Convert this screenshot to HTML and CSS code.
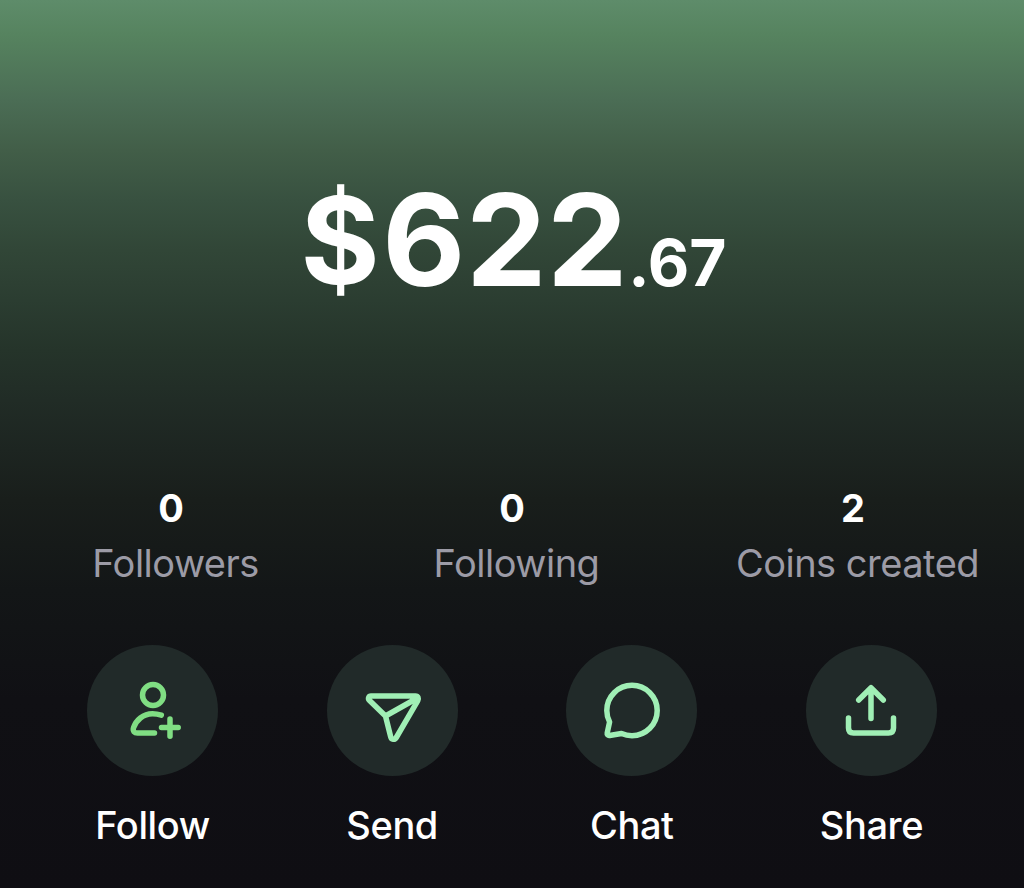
FILE: index.html
```html
<!DOCTYPE html>
<html lang="en">
<head>
    <meta charset="UTF-8">
    <meta name="viewport" content="width=device-width, initial-scale=1.0">
    <title>Profile</title>
    <link rel="stylesheet" href="styles.css">
</head>
<body>
    <main class="profile">
        <h1 class="balance"><span class="currency">$</span><span class="dollars">622</span><span class="cents">.67</span></h1>

        <section class="stats">
            <div class="stat">
                <span class="stat-value">0</span>
                <span class="stat-label">Followers</span>
            </div>
            <div class="stat">
                <span class="stat-value">0</span>
                <span class="stat-label">Following</span>
            </div>
            <div class="stat">
                <span class="stat-value">2</span>
                <span class="stat-label">Coins created</span>
            </div>
        </section>

        <nav class="actions">
            <button class="action">
                <span class="action-icon follow-icon">
                    <svg viewBox="0 0 131 131">
                        <circle cx="66" cy="50" r="10.5"/>
                        <path d="M74.3 70.200C71 69.100 68.500 68.700 65.500 68.700C56 68.700 49 75.500 46.600 82.500C45.400 86.200 47.500 88 50.500 88H67.500M83 74V91.200M74.500 82.500H91.200"/>
                    </svg>
                </span>
                <span class="action-label">Follow</span>
            </button>
            <button class="action">
                <span class="action-icon">
                    <svg viewBox="0 0 131 131">
                        <path d="M44 51H88.500C91 51 92 53.500 90.800 55.600L69.300 92.500C67.800 95.100 64.400 94.700 63.700 91.800L58.500 71L42.300 55.200C40.700 53.600 41.700 51 44 51ZM58.500 71L90.500 53"/>
                    </svg>
                </span>
                <span class="action-label">Send</span>
            </button>
            <button class="action">
                <span class="action-icon">
                    <svg viewBox="0 0 131 131">
                        <path d="M40.800 65.500A25.200 25.200 0 1 1 66 90.700C62.300 90.700 58.700 89.900 55.500 88.500L43.600 90.500C42 90.800 40.900 89.600 41.200 88L43.600 77C41.800 73.500 40.800 69.600 40.800 65.500Z"/>
                    </svg>
                </span>
                <span class="action-label">Chat</span>
            </button>
            <button class="action">
                <span class="action-icon">
                    <svg viewBox="0 0 131 131">
                        <path d="M65 73.500V43M52.700 55L65 42.700L77.300 55M42.500 73V83Q42.500 88 47.500 88H82.500Q87.500 88 87.500 83V73"/>
                    </svg>
                </span>
                <span class="action-label">Share</span>
            </button>
        </nav>
    </main>
</body>
</html>
```
FILE: styles.css
```css
* {
    box-sizing: border-box;
}
body {
    margin: 0;
    font-family: Inter, sans-serif;
    color: #fff;
    background-color: #0f0e13;
}
.profile {
    height: 888px;
    overflow: hidden;
    padding-top: 175px;
    background: linear-gradient(#5e8c6a 0, #56835f 35px, #4b6d55 100px, #425e48 150px, #385140 200px, #314637 250px, #2b3d31 300px, #25342a 350px, #212c26 400px, #1d2521 450px, #191e1b 500px, #131617 590px, #101014 700px, #0f0e13 888px);
}
.balance {
    margin: 0;
    height: 131px;
    line-height: 130px;
    padding-left: 3px;
    text-align: center;
    font-weight: 700;
    white-space: nowrap;
}
.currency {
    font-size: 121px;
    line-height: 1;
    letter-spacing: 2.5px;
    vertical-align: 2px;
}
.dollars {
    font-size: 128px;
    letter-spacing: 0.5px;
}
.cents {
    font-size: 64px;
}
.stats {
    display: grid;
    grid-template-columns: repeat(3, 341px);
    margin-top: 178px;
}
.stat {
    display: flex;
    flex-direction: column;
    align-items: center;
    gap: 7px;
}
.stat-value {
    padding-left: 1px;
    font-size: 38px;
    font-weight: 700;
    line-height: 48px;
}
.stat-label {
    padding-left: 10px;
    font-size: 38px;
    line-height: 48px;
    letter-spacing: -0.5px;
    color: #9c9ba6;
    white-space: nowrap;
}
.actions {
    display: flex;
    justify-content: space-between;
    margin-top: 57.5px;
    padding: 0 87px;
}
.action {
    display: flex;
    flex-direction: column;
    align-items: center;
    gap: 25.5px;
    width: 131px;
    padding: 0;
    border: none;
    background: none;
    font-family: inherit;
    color: #fff;
    cursor: pointer;
}
.action-icon {
    width: 131px;
    height: 131px;
    border-radius: 50%;
    background-color: #212a29;
    color: #a0efb5;
}
.follow-icon {
    color: #80de83;
}
.action-icon svg {
    display: block;
    fill: none;
    stroke: currentColor;
    stroke-width: 5.5;
    stroke-linecap: round;
    stroke-linejoin: round;
}
.action-label {
    font-size: 38px;
    font-weight: 500;
    line-height: 48px;
    letter-spacing: -0.4px;
}
```
